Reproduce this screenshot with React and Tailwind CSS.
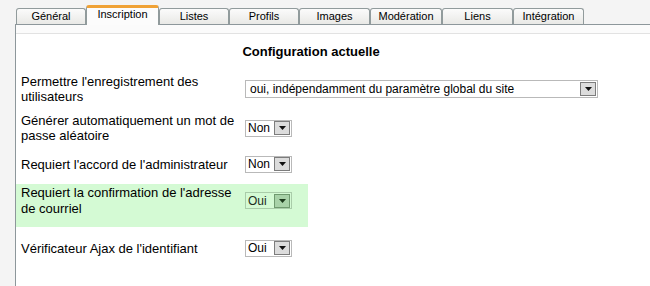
const TABS = [
  { id: 'general', label: 'Général', w: 'w-[70px]' },
  { id: 'inscription', label: 'Inscription', w: 'w-[73px]' },
  { id: 'listes', label: 'Listes', w: 'w-[70px]' },
  { id: 'profils', label: 'Profils', w: 'w-[70px]' },
  { id: 'images', label: 'Images', w: 'w-[71px]' },
  { id: 'moderation', label: 'Modération', w: 'w-[72px]' },
  { id: 'liens', label: 'Liens', w: 'w-[71px]' },
  { id: 'integration', label: 'Intégration', w: 'w-[71px]' },
]

function Arrow({ green }) {
  return (
    <span
      className={
        green
          ? 'flex h-[14px] w-[16px] items-center justify-center border border-[#6f9a6f] bg-[#a8d2a8]'
          : 'flex h-[14px] w-[16px] items-center justify-center border border-[#7c7c7c] bg-[#dcdcdc]'
      }
    >
      <svg width="7" height="4" viewBox="0 0 7 4">
        <path d="M0 0h7L3.5 4z" fill={green ? '#1c3a1c' : '#111'} />
      </svg>
    </span>
  )
}

function Select({ value, wide, green }) {
  return (
    <div
      className={[
        'flex items-center justify-between pr-[1px] text-[12px] leading-none',
        wide ? 'h-[18px] w-[353px] pl-[4px]' : 'h-[17px] w-[47px] pl-[2px]',
        green ? 'border border-[#a9cca9] bg-[#d4fad4] text-[#1d2d1d]' : 'border border-[#b9b9b9] bg-white text-black',
      ].join(' ')}
    >
      <span>{value}</span>
      <Arrow green={green} />
    </div>
  )
}

function Row({ label, children, className }) {
  return (
    <div className={'flex items-center ' + className}>
      <div className="w-[229px] pl-[5px] text-[13px] leading-[15px] text-black">{label}</div>
      {children}
    </div>
  )
}

export default function App() {
  return (
    <div className="h-[286px] w-[650px] overflow-hidden bg-[#f4f4f4] font-['Liberation_Sans',Arial,sans-serif]">
      <div className="flex h-[24px] items-end pl-[16px]">
        {TABS.map(t => {
          const active = t.id === 'inscription'
          return active ? (
            <div
              key={t.id}
              className={t.w + ' relative z-10 -mb-px flex h-[20px] items-start justify-center rounded-t-[3px] border-x border-t-[3px] border-x-[#919b9c] border-t-[#f0a236] bg-[#fcfcfc] text-[11px] leading-[13px] text-black'}
            >
              {t.label}
            </div>
          ) : (
            <div
              key={t.id}
              className={t.w + ' flex h-[16px] items-center justify-center rounded-t-[3px] border-x border-t border-[#919b9c] bg-gradient-to-b from-[#fbfbfb] to-[#e9e9e6] text-[11px] text-black'}
            >
              {t.label}
            </div>
          )
        })}
      </div>

      <div className="ml-[15px] h-[262px] border-l border-t border-[#8d979b] bg-white">
        <div className="h-[9px] border-b border-[#e2e2e2] bg-[#fbfbfb]" />

        <div className="mt-[11px] w-[590px] text-center text-[13px] font-bold leading-[14px] text-black">
          Configuration actuelle
        </div>

        <Row className="mt-[15px] h-[30px]" label="Permettre l'enregistrement des utilisateurs">
          <Select value="oui, indépendamment du paramètre global du site" wide />
        </Row>

        <Row className="mt-[9px] h-[30px]" label="Générer automatiquement un mot de passe aléatoire">
          <Select value="Non" />
        </Row>

        <Row className="mt-[13px] h-[16px]" label="Requiert l'accord de l'administrateur">
          <Select value="Non" />
        </Row>

        <div className="mt-[12px] flex h-[43px] w-[292px] items-start bg-[#d4fad4] pt-[1px]">
          <div className="w-[229px] pl-[5px] text-[13px] leading-[16px] text-black">
            Requiert la confirmation de l'adresse de courriel
          </div>
          <div className="mt-[7px]">
            <Select value="Oui" green />
          </div>
        </div>

        <Row className="mt-[13px] h-[16px]" label="Vérificateur Ajax de l'identifiant">
          <Select value="Oui" />
        </Row>
      </div>
    </div>
  )
}
